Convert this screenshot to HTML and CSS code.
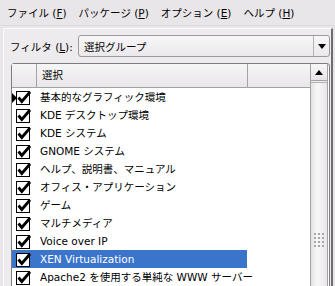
FILE: index.html
```html
<!DOCTYPE html>
<html lang="ja">
<head>
    <meta charset="UTF-8">
    <title>YaST ソフトウェア管理</title>
    <link rel="stylesheet" href="styles.css">
</head>
<body>
    <div class="menubar">
        <span class="menu-item">ファイル (<u>F</u>)</span>
        <span class="menu-item">パッケージ (<u>P</u>)</span>
        <span class="menu-item">オプション (<u>E</u>)</span>
        <span class="menu-item">ヘルプ (<u>H</u>)</span>
    </div>

    <div class="panel">
        <div class="filter-row">
            <label class="filter-label">フィルタ (<u>L</u>):</label>
            <div class="combo">
                <span class="combo-text">選択グループ</span>
                <span class="combo-btn"><span class="arrow-down"></span></span>
            </div>
        </div>

        <div class="list">
            <div class="list-main">
                <div class="list-header">
                    <div class="col-mark"></div>
                    <div class="col-name">選択</div>
                    <div class="col-extra"></div>
                </div>
                <div class="list-body">
                    <div class="row current">
                        <div class="col-mark"><span class="indicator"></span><svg class="check" width="15" height="15" viewBox="0 0 15 15"><rect x="0.5" y="1.5" width="13" height="13" fill="#fff" stroke="#000"/><path d="M2.5 7.5 L5.8 11.5 L14 2" fill="none" stroke="#000" stroke-width="2.8"/></svg></div>
                        <div class="col-name">基本的なグラフィック環境</div>
                        <div class="col-extra"></div>
                    </div>
                    <div class="row">
                        <div class="col-mark"><svg class="check" width="15" height="15" viewBox="0 0 15 15"><rect x="0.5" y="1.5" width="13" height="13" fill="#fff" stroke="#000"/><path d="M2.5 7.5 L5.8 11.5 L14 2" fill="none" stroke="#000" stroke-width="2.8"/></svg></div>
                        <div class="col-name">KDE デスクトップ環境</div>
                        <div class="col-extra"></div>
                    </div>
                    <div class="row">
                        <div class="col-mark"><svg class="check" width="15" height="15" viewBox="0 0 15 15"><rect x="0.5" y="1.5" width="13" height="13" fill="#fff" stroke="#000"/><path d="M2.5 7.5 L5.8 11.5 L14 2" fill="none" stroke="#000" stroke-width="2.8"/></svg></div>
                        <div class="col-name">KDE システム</div>
                        <div class="col-extra"></div>
                    </div>
                    <div class="row">
                        <div class="col-mark"><svg class="check" width="15" height="15" viewBox="0 0 15 15"><rect x="0.5" y="1.5" width="13" height="13" fill="#fff" stroke="#000"/><path d="M2.5 7.5 L5.8 11.5 L14 2" fill="none" stroke="#000" stroke-width="2.8"/></svg></div>
                        <div class="col-name">GNOME システム</div>
                        <div class="col-extra"></div>
                    </div>
                    <div class="row">
                        <div class="col-mark"><svg class="check" width="15" height="15" viewBox="0 0 15 15"><rect x="0.5" y="1.5" width="13" height="13" fill="#fff" stroke="#000"/><path d="M2.5 7.5 L5.8 11.5 L14 2" fill="none" stroke="#000" stroke-width="2.8"/></svg></div>
                        <div class="col-name">ヘルプ、説明書、マニュアル</div>
                        <div class="col-extra"></div>
                    </div>
                    <div class="row">
                        <div class="col-mark"><svg class="check" width="15" height="15" viewBox="0 0 15 15"><rect x="0.5" y="1.5" width="13" height="13" fill="#fff" stroke="#000"/><path d="M2.5 7.5 L5.8 11.5 L14 2" fill="none" stroke="#000" stroke-width="2.8"/></svg></div>
                        <div class="col-name">オフィス・アプリケーション</div>
                        <div class="col-extra"></div>
                    </div>
                    <div class="row">
                        <div class="col-mark"><svg class="check" width="15" height="15" viewBox="0 0 15 15"><rect x="0.5" y="1.5" width="13" height="13" fill="#fff" stroke="#000"/><path d="M2.5 7.5 L5.8 11.5 L14 2" fill="none" stroke="#000" stroke-width="2.8"/></svg></div>
                        <div class="col-name">ゲーム</div>
                        <div class="col-extra"></div>
                    </div>
                    <div class="row">
                        <div class="col-mark"><svg class="check" width="15" height="15" viewBox="0 0 15 15"><rect x="0.5" y="1.5" width="13" height="13" fill="#fff" stroke="#000"/><path d="M2.5 7.5 L5.8 11.5 L14 2" fill="none" stroke="#000" stroke-width="2.8"/></svg></div>
                        <div class="col-name">マルチメディア</div>
                        <div class="col-extra"></div>
                    </div>
                    <div class="row">
                        <div class="col-mark"><svg class="check" width="15" height="15" viewBox="0 0 15 15"><rect x="0.5" y="1.5" width="13" height="13" fill="#fff" stroke="#000"/><path d="M2.5 7.5 L5.8 11.5 L14 2" fill="none" stroke="#000" stroke-width="2.8"/></svg></div>
                        <div class="col-name">Voice over IP</div>
                        <div class="col-extra"></div>
                    </div>
                    <div class="row selected">
                        <div class="col-mark"><svg class="check" width="15" height="15" viewBox="0 0 15 15"><rect x="0.5" y="1.5" width="13" height="13" fill="#fff" stroke="#000"/><path d="M2.5 7.5 L5.8 11.5 L14 2" fill="none" stroke="#000" stroke-width="2.8"/></svg></div>
                        <div class="col-name">XEN Virtualization</div>
                        <div class="col-extra"></div>
                    </div>
                    <div class="row">
                        <div class="col-mark"><svg class="check" width="15" height="15" viewBox="0 0 15 15"><rect x="0.5" y="1.5" width="13" height="13" fill="#fff" stroke="#000"/><path d="M2.5 7.5 L5.8 11.5 L14 2" fill="none" stroke="#000" stroke-width="2.8"/></svg></div>
                        <div class="col-name">Apache2 を使用する単純な WWW サーバー</div>
                        <div class="col-extra"></div>
                    </div>
                </div>
            </div>

            <div class="vscroll">
                <div class="scroll-btn"><span class="arrow-up"></span></div>
                <div class="scroll-thumb"><div class="grip"></div></div>
            </div>
        </div>
    </div>
</body>
</html>
```

FILE: styles.css
```css
body {
    margin: 0;
    width: 335px;
    height: 286px;
    overflow: hidden;
    background: #e9e6e9;
    color: #000;
    font-family: "DejaVu Sans", "Noto Sans CJK JP", sans-serif;
    font-size: 10.5px;
}

u {
    text-decoration: underline;
}

/* menu bar */
.menubar {
    height: 26px;
    display: flex;
    align-items: center;
    padding-left: 7px;
    gap: 12px;
    border-bottom: 1px solid #dcd8dc;
    box-sizing: border-box;
}

.menu-item {
    white-space: nowrap;
}

/* main panel */
.panel {
    margin: 2px 2px 0 3px;
    border-top: 1px solid #fbfafb;
    border-left: 1px solid #fbfafb;
    border-right: 2px solid #6e6c6e;
    background: #eeebee;
    height: 300px;
    box-sizing: border-box;
}

.filter-row {
    display: flex;
    align-items: center;
    padding: 6px 1px 0 6px;
    height: 22px;
}

.filter-label {
    width: 68px;
    white-space: nowrap;
}

.combo {
    flex: 1;
    height: 22px;
    box-sizing: border-box;
    border: 1px solid #9c9a9c;
    border-radius: 3px;
    background: linear-gradient(#f8f7f8, #eae8ea);
    display: flex;
    align-items: center;
}

.combo-text {
    flex: 1;
    padding-left: 5px;
}

.combo-btn {
    width: 15px;
    height: 20px;
    border-left: 1px solid #b4b2b4;
    display: flex;
    align-items: center;
    justify-content: center;
}

.arrow-down {
    width: 0;
    height: 0;
    border-left: 4px solid transparent;
    border-right: 4px solid transparent;
    border-top: 5px solid #000;
}

.arrow-up {
    width: 0;
    height: 0;
    border-left: 4px solid transparent;
    border-right: 4px solid transparent;
    border-bottom: 5px solid #000;
}

/* list view */
.list {
    margin: 6px 1px 0 7px;
    border: 1px solid #7e7c7e;
    border-radius: 3px 3px 0 0;
    background: #fff;
    display: flex;
    height: 260px;
}

.list-main {
    flex: 1;
}

.list-header {
    display: flex;
    height: 23px;
    background: linear-gradient(#f7f6f7, #e8e6e8);
    border-bottom: 1px solid #a4a2a4;
}

.list-header .col-name {
    line-height: 23px;
    padding-left: 5px;
    border-left: 1px solid #a4a2a4;
}

.list-header .col-extra {
    border-left: 1px solid #a4a2a4;
}

.col-mark {
    width: 24px;
    display: flex;
    align-items: center;
    position: relative;
}

.col-name {
    width: 211px;
    box-sizing: border-box;
    padding-left: 4px;
    white-space: nowrap;
}

.col-extra {
    flex: 1;
}

.row {
    display: flex;
    height: 18px;
    line-height: 18px;
}

.check {
    margin-left: 4px;
}

.indicator {
    position: absolute;
    left: 0;
    top: 5px;
    width: 0;
    height: 0;
    border-top: 5px solid transparent;
    border-bottom: 5px solid transparent;
    border-left: 5px solid #000;
}

.row.selected .col-mark,
.row.selected .col-name {
    background: #3b75cb;
    color: #fff;
}

/* scrollbar */
.vscroll {
    width: 16px;
    margin-right: 1px;
    border-left: 1px solid #a4a2a4;
    border-right: 1px solid #a4a2a4;
    display: flex;
    flex-direction: column;
    background: #eeecee;
}

.scroll-btn {
    height: 16px;
    flex-shrink: 0;
    display: flex;
    align-items: center;
    justify-content: center;
    border-bottom: 1px solid #a4a2a4;
    background: linear-gradient(#f8f7f8, #e6e4e6);
}

.scroll-thumb {
    margin-top: 1px;
    height: 314px;
    flex-shrink: 0;
    background: linear-gradient(90deg, #e4e2e4, #f8f7f8 40%, #e8e6e8);
    border-top: 1px solid #b4b2b4;
    display: flex;
    align-items: center;
    justify-content: center;
}

.grip {
    width: 12px;
    height: 16px;
    background-image: radial-gradient(circle, #a8a6a8 0.8px, transparent 1px);
    background-size: 4px 4px;
}
```
